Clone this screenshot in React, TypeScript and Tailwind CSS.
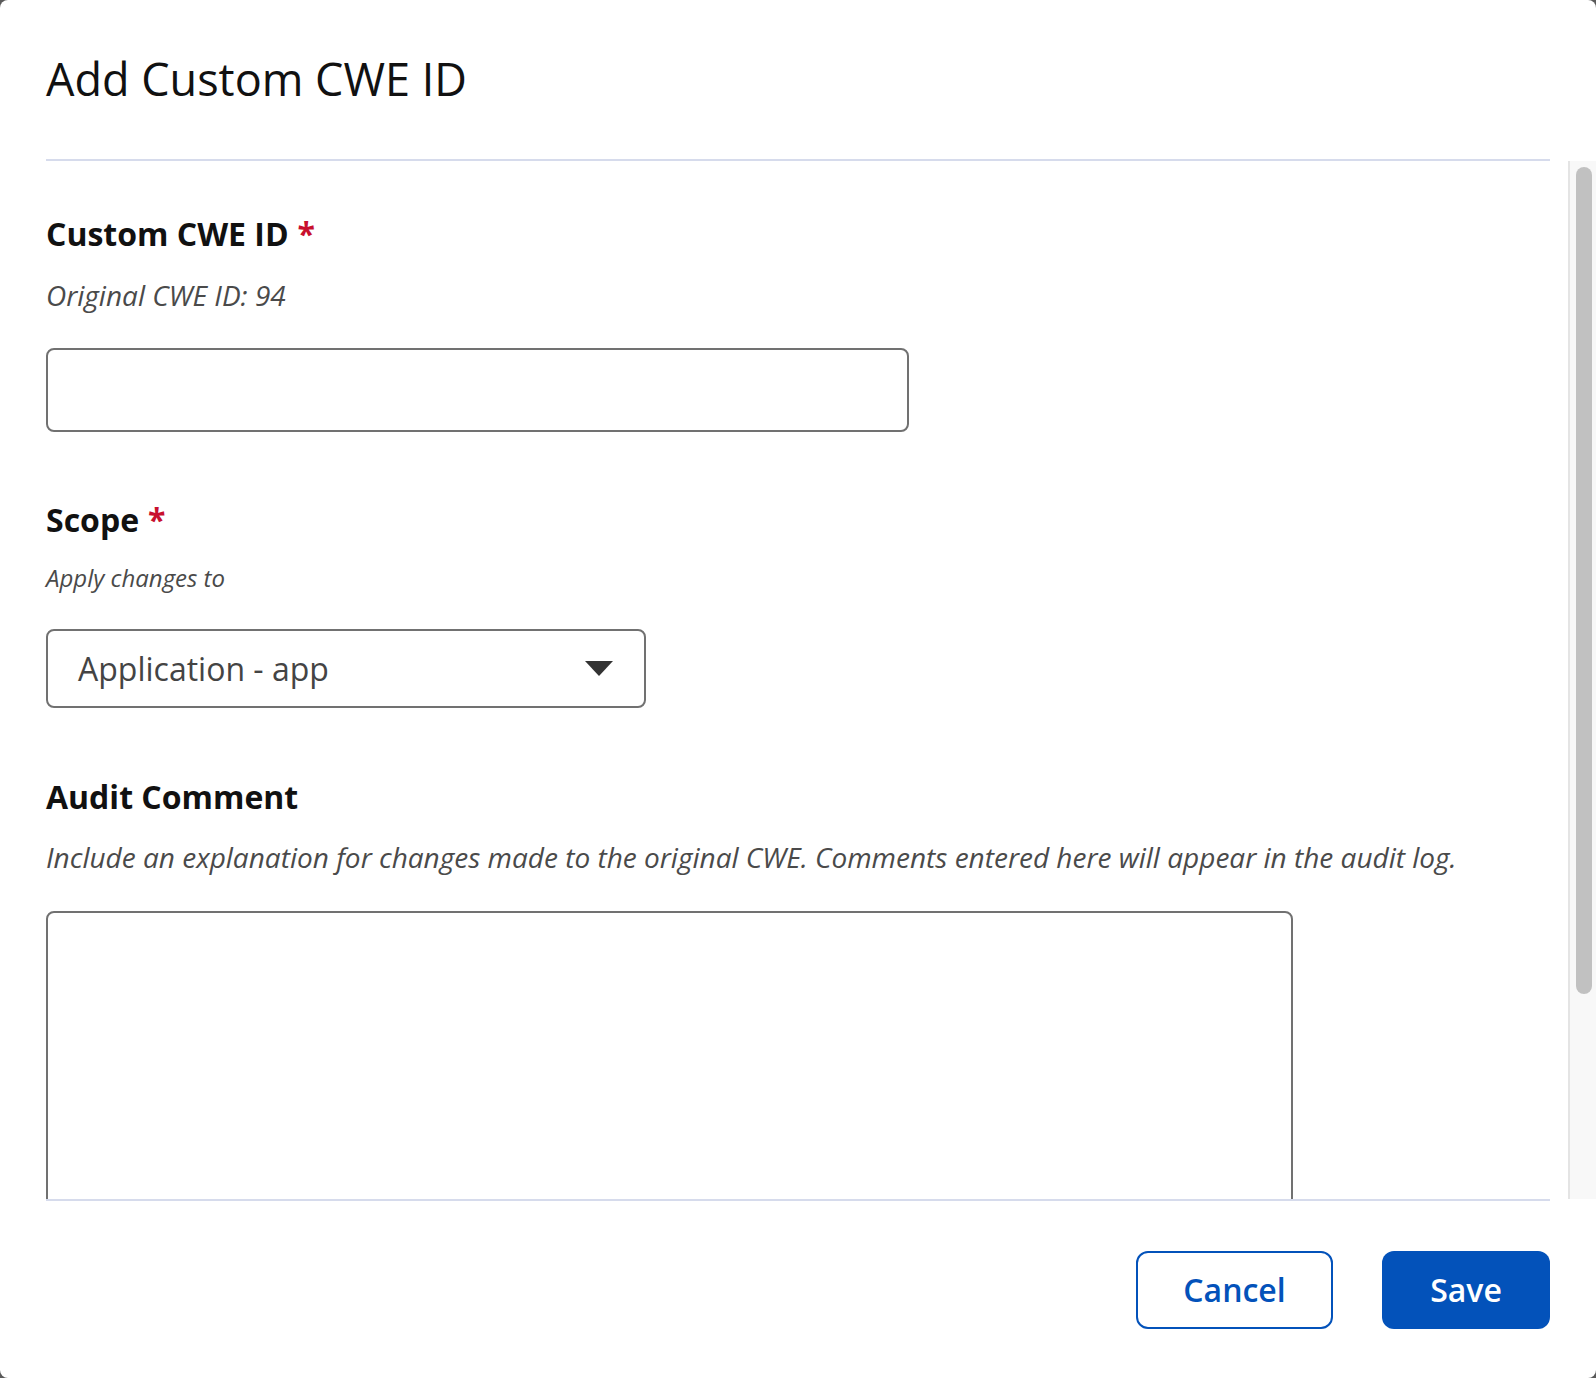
import { ChangeEvent, useState } from 'react';

const font = { fontFamily: '"Open Sans", "Noto Sans", sans-serif' };

const Required = () => <span className="ml-[9px] text-[#c8102e]">*</span>;

export default function App() {
  const [cweId, setCweId] = useState('');
  const [comment, setComment] = useState('');

  return (
    <div className="w-[1596px] h-[1378px] bg-[#5a5a5a]" style={font}>
      <div className="w-full h-full bg-white rounded-[8px] flex flex-col overflow-hidden">
        {/* Header */}
        <div className="px-[46px] pt-[49px]">
          <div className="pb-[50px] border-b-2 border-[#d6dbec]">
            <h1 className="text-[45px] leading-[60px] font-medium text-[#111]">Add Custom CWE ID</h1>
          </div>
        </div>

        {/* Scrollable body */}
        <div className="flex-1 min-h-0 flex">
          <div className="flex-1 min-w-0 overflow-hidden pl-[46px] pr-[18px]">
            <div className="pt-[53px]">
              <label className="block text-[32px] leading-[40px] font-bold text-[#111]">
                Custom CWE ID<Required />
              </label>
              <p className="mt-[23px] text-[28px] leading-[36px] italic text-[#4a4a4a]">Original CWE ID: 94</p>
              <input
                value={cweId}
                onChange={(e: ChangeEvent<HTMLInputElement>) => setCweId(e.target.value)}
                className="mt-[35px] block w-[863px] h-[84px] rounded-[8px] border-2 border-[#717171] px-[20px] text-[28px] outline-none"
              />

              <label className="mt-[68px] block text-[32px] leading-[40px] font-bold text-[#111]">
                Scope<Required />
              </label>
              <p className="mt-[22px] text-[24px] leading-[32px] italic text-[#4a4a4a]">Apply changes to</p>
              <div className="mt-[35px] w-[600px] h-[79px] rounded-[8px] border-2 border-[#717171] flex items-center justify-between pl-[30px] pr-[31px]">
                <span className="text-[32px] text-[#444]">Application - app</span>
                <svg width="28" height="15" viewBox="0 0 28 15">
                  <path d="M0 0 L28 0 L14 15 Z" fill="#333" />
                </svg>
              </div>

              <label className="mt-[69px] block text-[32px] leading-[40px] font-bold text-[#111]">Audit Comment</label>
              <p className="mt-[22px] text-[28px] leading-[36px] italic text-[#4a4a4a] whitespace-nowrap">
                Include an explanation for changes made to the original CWE. Comments entered here will appear in the audit log.
              </p>
              <textarea
                value={comment}
                onChange={(e: ChangeEvent<HTMLTextAreaElement>) => setComment(e.target.value)}
                className="mt-[36px] block w-[1247px] h-[330px] rounded-[8px] border-2 border-[#717171] resize-none outline-none p-[16px] text-[26px]"
              />
            </div>
          </div>

          {/* Scrollbar */}
          <div className="w-[28px] shrink-0 bg-[#f8f8f8] border-l-2 border-[#e4e4e4] pt-[6px] pl-[6px]">
            <div className="w-[16px] h-[827px] rounded-full bg-[#c1c1c1]" />
          </div>
        </div>

        {/* Footer */}
        <div className="px-[46px]">
          <div className="border-t-2 border-[#d6dbec] h-[179px] pt-[50px] flex justify-end gap-[49px]">
            <button className="w-[197px] h-[78px] rounded-[12px] border-2 border-[#0352ba] bg-white text-[#0352ba] text-[32px] font-semibold">
              Cancel
            </button>
            <button className="w-[168px] h-[78px] rounded-[12px] bg-[#0352ba] text-white text-[32px] font-semibold">
              Save
            </button>
          </div>
        </div>
      </div>
    </div>
  );
}
